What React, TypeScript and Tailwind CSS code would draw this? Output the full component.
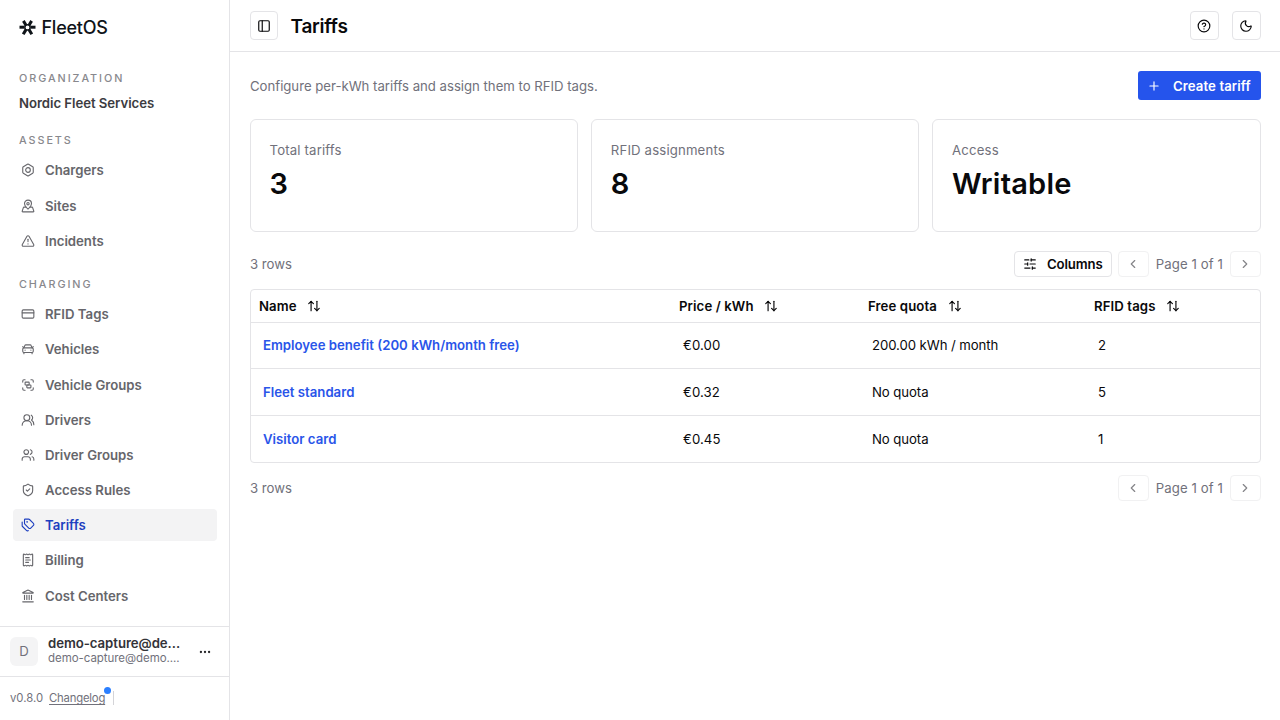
import React from 'react';
import {
  ArrowUpDown,
  Bolt,
  CarFront,
  ChevronLeft,
  ChevronRight,
  CircleHelp,
  CreditCard,
  Ellipsis,
  Group,
  Landmark,
  MapPinned,
  Moon,
  PanelLeft,
  Plus,
  ReceiptText,
  ShieldCheck,
  SlidersHorizontal,
  Tags,
  TriangleAlert,
  Users,
  UsersRound,
} from 'lucide-react';
import type { LucideIcon } from 'lucide-react';

type NavItem = { label: string; icon: LucideIcon; active?: boolean };

const assets: NavItem[] = [
  { label: 'Chargers', icon: Bolt },
  { label: 'Sites', icon: MapPinned },
  { label: 'Incidents', icon: TriangleAlert },
];

const charging: NavItem[] = [
  { label: 'RFID Tags', icon: CreditCard },
  { label: 'Vehicles', icon: CarFront },
  { label: 'Vehicle Groups', icon: Group },
  { label: 'Drivers', icon: UsersRound },
  { label: 'Driver Groups', icon: Users },
  { label: 'Access Rules', icon: ShieldCheck },
  { label: 'Tariffs', icon: Tags, active: true },
  { label: 'Billing', icon: ReceiptText },
  { label: 'Cost Centers', icon: Landmark },
];

const stats = [
  { label: 'Total tariffs', value: '3' },
  { label: 'RFID assignments', value: '8' },
  { label: 'Access', value: 'Writable' },
];

const columns = ['Name', 'Price / kWh', 'Free quota', 'RFID tags'];

const tariffs = [
  { name: 'Employee benefit (200 kWh/month free)', price: '€0.00', quota: '200.00 kWh / month', tags: 2 },
  { name: 'Fleet standard', price: '€0.32', quota: 'No quota', tags: 5 },
  { name: 'Visitor card', price: '€0.45', quota: 'No quota', tags: 1 },
];

const Logo: React.FC = () => (
  <div className="flex items-center gap-[6px] text-[#0f1419]">
    <svg width="17" height="16" viewBox="0 0 17 16" fill="none" stroke="currentColor">
      <g strokeWidth="3">
        <path d="M0.5 7.2H5.6" />
        <path d="M11.4 7.2H16.5" />
        <path d="M4.4 0.9 7 5.2" />
        <path d="M12.6 0.9 10 5.2" />
        <path d="M4.2 14.2 7 9.6" />
        <path d="M12.8 14.2 10 9.6" />
      </g>
      <circle cx="8.5" cy="7.4" r="2.6" strokeWidth="1.4" />
    </svg>
    <span className="text-[18px] leading-6 tracking-[-0.25px] font-[450]">FleetOS</span>
  </div>
);

const SectionLabel: React.FC<{ children: React.ReactNode }> = ({ children }) => (
  <p className="px-[6px] text-[10.8px] leading-4 font-medium tracking-[1.95px] text-[#88888d] uppercase">{children}</p>
);

const NavList: React.FC<{ items: NavItem[] }> = ({ items }) => (
  <ul className="flex flex-col gap-[3.2px]">
    {items.map(({ label, icon: Icon, active }) => (
      <li
        key={label}
        className={
          active
            ? 'flex h-8 items-center gap-[9.6px] rounded-[4px] bg-[#f3f3f4] px-[8.4px] text-[#1d3fc0]'
            : 'flex h-8 items-center gap-[9.6px] rounded-[4px] px-[8.4px] text-[#66666b]'
        }
      >
        <Icon size={14} strokeWidth={1.9} />
        <span className="font-[580]">{label}</span>
      </li>
    ))}
  </ul>
);

const Sidebar: React.FC = () => (
  <aside className="flex w-[230px] shrink-0 flex-col border-r border-[#e4e4e7]">
    <div className="px-[18.5px] pt-4">
      <Logo />
    </div>
    <div className="flex-1 pt-[30.5px] pr-3 pl-[13px]">
      <SectionLabel>Organization</SectionLabel>
      <p className="mt-[6px] px-[6px] leading-5 font-semibold tracking-[-0.05px] text-[#3c3c41]">Nordic Fleet Services</p>
      <div className="mt-[20.1px] mb-[5.8px]">
        <SectionLabel>Assets</SectionLabel>
      </div>
      <NavList items={assets} />
      <div className="mt-[19.8px] mb-[5.6px]">
        <SectionLabel>Charging</SectionLabel>
      </div>
      <NavList items={charging} />
    </div>
    <div className="flex h-[50px] items-center gap-[10px] border-t border-[#e4e4e7] px-[10px]">
      <div className="flex h-[29px] w-7 shrink-0 items-center justify-center rounded-md bg-[#f4f4f5] pb-px text-[#71717b]">D</div>
      <div className="min-w-0 flex-1 pb-[2px]">
        <p className="leading-[15px] font-[580] tracking-[-0.05px] text-[#333338]">demo-capture@de...</p>
        <p className="text-[11.5px] leading-[14px] tracking-[-0.05px] text-[#71717b]">demo-capture@demo....</p>
      </div>
      <Ellipsis size={14} className="mr-[7px] text-[#27272a]" />
    </div>
    <div className="flex h-11 items-center border-t border-[#e4e4e7] px-[10px] pb-px text-[11.3px] text-[#71717b]">
      <span>v0.8.0</span>
      <span className="relative ml-[6px] tracking-[-0.2px] underline underline-offset-2">
        Changelog
        <span className="absolute -top-[1px] -right-[6px] h-[7px] w-[7px] rounded-full bg-[#2b7fff]" />
      </span>
      <span className="ml-2 h-[14px] w-px bg-[#d4d4d8]" />
    </div>
  </aside>
);

const IconButton: React.FC<{ icon: LucideIcon }> = ({ icon: Icon }) => (
  <button className="flex h-[29px] w-[29px] items-center justify-center rounded-[4px] border border-[#e4e4e7]">
    <Icon size={14} />
  </button>
);

const Pager: React.FC = () => (
  <div className="flex items-center">
    <button className="flex h-[26px] w-[31px] items-center justify-center rounded-[4px] border border-[#f1f1f2] text-[#848488]">
      <ChevronLeft size={14} />
    </button>
    <span className="w-[81px] pl-[7px] tracking-[0.1px] whitespace-nowrap text-[#71717b]">Page 1 of 1</span>
    <button className="flex h-[26px] w-[31px] items-center justify-center rounded-[4px] border border-[#f1f1f2] text-[#848488]">
      <ChevronRight size={14} />
    </button>
  </div>
);

const TariffTable: React.FC = () => (
  <div className="mt-3 overflow-hidden rounded-[4px] border border-[#e4e4e7]">
    <table className="w-full table-fixed border-collapse text-left">
      <colgroup>
        <col className="w-[420px]" />
        <col className="w-[189px]" />
        <col className="w-[226px]" />
        <col />
      </colgroup>
      <thead>
        <tr className="h-8 border-b border-[#e4e4e7]">
          {columns.map((column) => (
            <th key={column} className="px-2 py-0 font-[580] tracking-[0.1px]">
              <div className="flex items-center gap-[10.8px]">
                {column}
                <ArrowUpDown size={14} />
              </div>
            </th>
          ))}
        </tr>
      </thead>
      <tbody>
        {tariffs.map((tariff) => (
          <tr key={tariff.name} className="h-[46.6px] border-b border-[#e4e4e7] last:border-b-0">
            <td className="px-3 py-0 font-[560] text-[#2a55e9]">{tariff.name}</td>
            <td className="px-3 py-0 tracking-[0.1px]">{tariff.price}</td>
            <td className="px-3 py-0 tracking-[-0.08px]">{tariff.quota}</td>
            <td className="px-3 py-0">{tariff.tags}</td>
          </tr>
        ))}
      </tbody>
    </table>
  </div>
);

const App: React.FC = () => {
  return (
    <div className="flex h-screen overflow-hidden bg-white font-['Inter',sans-serif] text-[13.2px] leading-5 text-[#09090b]">
      <Sidebar />
      <div className="flex min-w-0 flex-1 flex-col">
        <header className="flex h-[52px] items-center border-b border-[#e4e4e7] pr-[19.3px] pl-5">
          <button className="flex h-[29px] w-7 items-center justify-center rounded-[4px] border border-[#e4e4e7]">
            <PanelLeft size={14} />
          </button>
          <h1 className="ml-[12.5px] pt-[2px] text-[19px] leading-7 font-semibold tracking-[-0.25px]">Tariffs</h1>
          <div className="ml-auto flex gap-[13px]">
            <IconButton icon={CircleHelp} />
            <IconButton icon={Moon} />
          </div>
        </header>
        <main className="pt-[19px] pr-[19.3px] pl-5">
          <div className="flex items-center justify-between">
            <p className="tracking-[-0.02px] text-[#71717b]">Configure per-kWh tariffs and assign them to RFID tags.</p>
            <button className="flex h-[29px] w-[123px] items-center justify-between rounded-[3px] bg-[#2554ec] pr-[10px] pl-[9px] font-[580] tracking-[0.08px] text-white">
              <Plus size={14} />
              Create tariff
            </button>
          </div>
          <div className="mt-[19px] grid grid-cols-3 gap-[13px]">
            {stats.map((stat) => (
              <div key={stat.label} className="h-[113px] rounded-md border border-[#e4e4e7] px-[18.6px] pt-5">
                <p className="tracking-[0.15px] text-[#71717b]">{stat.label}</p>
                <p className="mt-[6px] text-[29px] leading-9 font-semibold tracking-[0.2px]">{stat.value}</p>
              </div>
            ))}
          </div>
          <div className="mt-[19px] flex h-[26px] items-center justify-between">
            <span className="text-[#71717b]">3 rows</span>
            <div className="flex gap-[6px]">
              <button className="flex h-[26px] w-[98px] items-center justify-between rounded-[4px] border border-[#e4e4e7] px-2 font-[580] tracking-[-0.1px]">
                <SlidersHorizontal size={14} />
                Columns
              </button>
              <Pager />
            </div>
          </div>
          <TariffTable />
          <div className="mt-3 flex h-[26px] items-center justify-between">
            <span className="text-[#71717b]">3 rows</span>
            <Pager />
          </div>
        </main>
      </div>
    </div>
  );
};

export default App;
